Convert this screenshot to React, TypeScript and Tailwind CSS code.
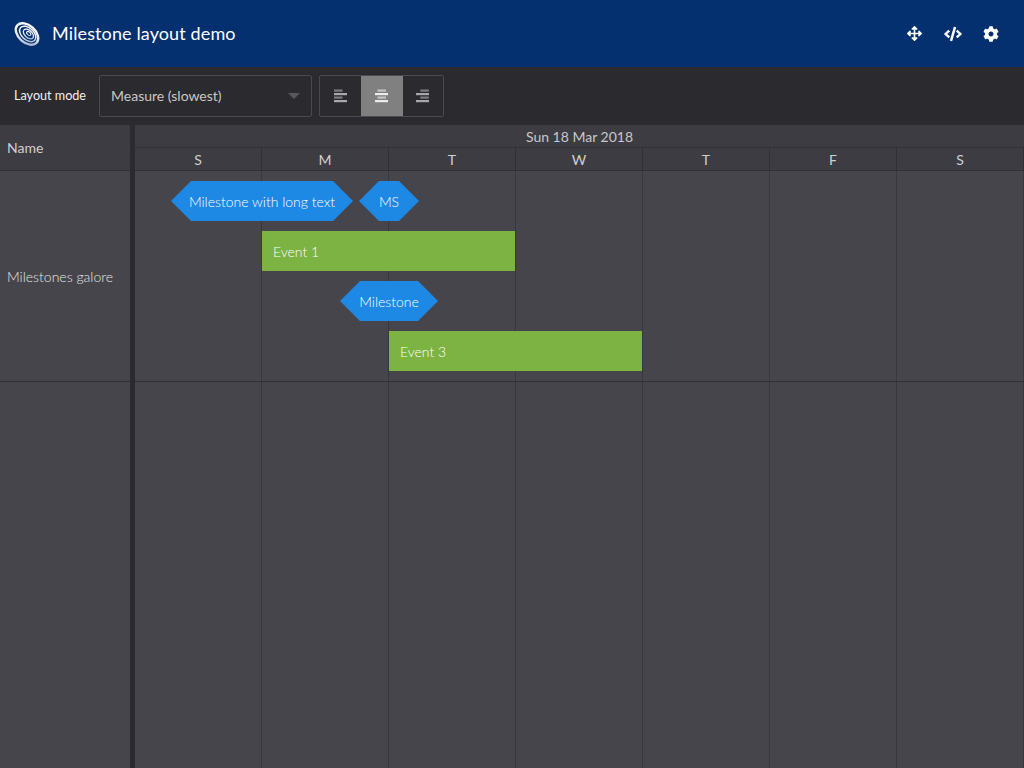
import { FaArrowsAlt, FaCode, FaCog } from "react-icons/fa";

const days = ["S", "M", "T", "W", "T", "F", "S"];
const hexClip = "[clip-path:polygon(20px_0,calc(100%-20px)_0,100%_50%,calc(100%-20px)_100%,20px_100%,0_50%)]";

function Logo() {
  return (
    <svg width="28" height="28" viewBox="0 0 28 28" fill="none">
      <defs>
        <linearGradient id="swirl" x1="0" y1="0" x2="1" y2="1">
          <stop offset="0" stopColor="#ffffff" />
          <stop offset="0.6" stopColor="#e6ebf3" />
          <stop offset="1" stopColor="#8fa2bf" />
        </linearGradient>
      </defs>
      <g transform="rotate(42 14 14)" stroke="url(#swirl)">
        <ellipse cx="14" cy="14" rx="13" ry="8.500" strokeWidth="2.400" />
        <ellipse cx="14.500" cy="13.500" rx="9.500" ry="6" strokeWidth="1.500" />
        <ellipse cx="15" cy="13" rx="6" ry="3.700" strokeWidth="1.300" />
        <ellipse cx="15" cy="12.500" rx="2.500" ry="1.500" strokeWidth="1.100" />
      </g>
    </svg>
  );
}

function AlignIcon({ mode, on }: { mode: "left" | "center" | "right"; on?: boolean }) {
  const xShort = mode === "left" ? 0 : mode === "center" ? 2.500 : 4.300;
  const dim = on ? "#c4c4c4" : "#7d7d81";
  const bright = on ? "#ececec" : "#a8a8ab";
  return (
    <svg width="13" height="14" viewBox="0 0 13 14">
      <rect x={xShort} y="0.500" width="8.500" height="2.200" fill={dim} />
      <rect x="0" y="4" width="13" height="2.200" fill={bright} />
      <rect x={xShort} y="7.500" width="8.500" height="2.200" fill={dim} />
      <rect x="0" y="11" width="13" height="2.200" fill={bright} />
    </svg>
  );
}

function Milestone({ text, left, top, width }: { text: string; left: number; top: number; width: number }) {
  return (
    <div
      className={`absolute h-10 flex items-center justify-center bg-[#1e88e5] text-white text-[14px] font-light ${hexClip}`}
      style={{ left, top, width }}
    >
      {text}
    </div>
  );
}

function Event({ text, left, top }: { text: string; left: number; top: number }) {
  return (
    <div
      className="absolute h-10 w-[253px] flex items-center pl-[11px] bg-[#7cb342] text-white text-[14px] font-light"
      style={{ left, top }}
    >
      {text}
    </div>
  );
}

export default function App() {
  return (
    <div className="w-[1024px] h-[768px] overflow-hidden flex flex-col bg-[#2b2a2f] font-['Lato','Open_Sans',sans-serif]">
      <header className="h-[67px] shrink-0 flex items-center bg-[#05306f] text-white">
        <div className="ml-[13px] w-[28px] h-[28px]">
          <Logo />
        </div>
        <h1 className="ml-[11px] text-[18px] font-normal tracking-[0.12px]">Milestone layout demo</h1>
        <div className="ml-auto mr-[25px] flex items-center text-[16px]">
          <FaArrowsAlt className="mr-[22px] text-[15px]" />
          <FaCode className="text-[18px] mr-[21px]" />
          <FaCog />
        </div>
      </header>

      <div className="h-[58px] shrink-0 flex items-center bg-[#2b2a2f]">
        <span className="ml-[14px] w-[72px] text-[12.600px] text-[#f0f0f0] whitespace-nowrap">Layout mode</span>
        <div className="ml-[13px] w-[213px] h-[42px] flex items-center justify-between pl-[11px] pr-[11px] border border-[#4b4a50] rounded-[2px] text-[14px] text-[#c8c8c8]">
          <span className="-translate-y-px">Measure (slowest)</span>
          <span className="w-0 h-0 border-x-[6.500px] border-x-transparent border-t-[6px] border-t-[#58575c]" />
        </div>
        <div className="ml-[7px] w-[125px] h-[42px] flex border border-[#4b4a50] rounded-[2px]">
          <div className="flex-1 flex items-center justify-center">
            <AlignIcon mode="left" />
          </div>
          <div className="w-[42px] flex items-center justify-center bg-[#808080]">
            <AlignIcon mode="center" on />
          </div>
          <div className="flex-1 flex items-center justify-center">
            <AlignIcon mode="right" />
          </div>
        </div>
      </div>

      <div className="flex-1 flex min-h-0">
        <div className="w-[130px] shrink-0 flex flex-col bg-[#46454b]">
          <div className="h-[46px] flex items-center pl-[7px] bg-[#3d3c42] border-b border-[#313036] text-[14px] text-[#d0d0d0]">
            Name
          </div>
          <div className="h-[211px] flex items-center pl-[7px] border-b border-[#313036] text-[14px] font-light text-[#e6e6e6]">
            Milestones galore
          </div>
        </div>
        <div className="w-[5px] shrink-0 bg-[#2b2a2f]" />
        <div className="flex-1 flex flex-col min-w-0">
          <div className="h-[23px] shrink-0 flex items-center justify-center bg-[#3d3c42] border-b border-[#313036] text-[14px] text-[#c8c8c8]">
            Sun 18 Mar 2018
          </div>
          <div className="h-[23px] shrink-0 flex bg-[#3d3c42] border-b border-[#313036]">
            {days.map((d, i) => (
              <div
                key={i}
                className="w-[127px] shrink-0 flex items-center justify-center border-r border-[#313036] text-[14px] text-[#d0d0d0]"
              >
                {d}
              </div>
            ))}
          </div>
          <div className="relative flex-1 flex bg-[#46454b]">
            {days.map((_, i) => (
              <div key={i} className="w-[127px] shrink-0 border-r border-[#38373d]" />
            ))}
            <div className="absolute left-0 right-0 top-[210px] h-px bg-[#313036]" />
            <Milestone text="Milestone with long text" left={36} top={10} width={182} />
            <Milestone text="MS" left={224} top={10} width={60} />
            <Event text="Event 1" left={127} top={60} />
            <Milestone text="Milestone" left={205} top={110} width={98} />
            <Event text="Event 3" left={254} top={160} />
          </div>
        </div>
      </div>
    </div>
  );
}
